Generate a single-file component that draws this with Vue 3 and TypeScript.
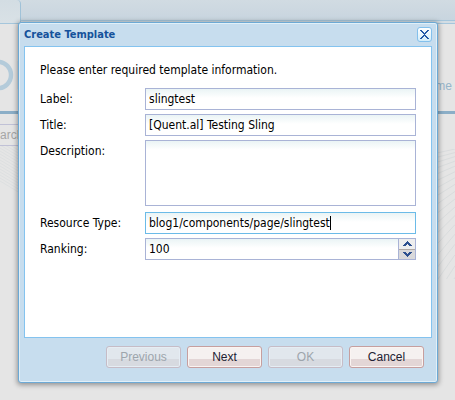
<script setup lang="ts">
import { reactive } from 'vue'

interface TemplateForm {
  label: string
  title: string
  description: string
  resourceType: string
  ranking: number
}

interface WizardButton {
  text: string
  disabled: boolean
}

const form = reactive<TemplateForm>({
  label: 'slingtest',
  title: '[Quent.al] Testing Sling',
  description: '',
  resourceType: 'blog1/components/page/slingtest',
  ranking: 100,
})

const buttons: WizardButton[] = [
  { text: 'Previous', disabled: true },
  { text: 'Next', disabled: false },
  { text: 'OK', disabled: true },
  { text: 'Cancel', disabled: false },
]

// Fan of diagonal rules behind the page content
const rays: number[] = Array.from({ length: 18 }, (_, i) => i)
</script>

<template>
  <div class="screen">
    <div class="page">
      <div class="tabs"><div class="tab"></div><div class="strip"></div></div>
      <header class="masthead">
        <svg class="logo" width="20" height="32" viewBox="0 0 20 32" aria-hidden="true">
          <ellipse cx="-2" cy="16" rx="13" ry="13.2" fill="none" stroke="#b4cbda" stroke-width="4.4" />
          <path d="M17.500 2v28" stroke="#dbe0e3" stroke-width="1" />
        </svg>
        <a class="home" href="#">me</a>
      </header>
      <div class="lower">
        <div class="search">arch</div>
        <svg class="fan fan-left" width="20" height="60" viewBox="0 0 20 60" aria-hidden="true">
          <path
            v-for="r in rays"
            :key="r"
            :d="`M0 ${r * 3 - 16}L20 ${r * 3 - 4}`"
            stroke="#dddfe0"
            stroke-width="1"
          />
        </svg>
        <svg class="fan fan-right" width="18" height="130" viewBox="0 0 18 130" aria-hidden="true">
          <path
            v-for="r in rays"
            :key="r"
            :d="`M0 ${4 + r * 4 + r * r * 0.300}L18 ${r * 3.300 + r * r * 0.250}`"
            stroke="#d9dcdd"
            stroke-width="1"
          />
        </svg>
      </div>
    </div>

    <section class="dialog" role="dialog" aria-labelledby="dialog-title">
      <header class="titlebar">
        <h1 id="dialog-title">Create Template</h1>
        <button class="close" type="button" aria-label="Close">
          <svg width="9" height="9" viewBox="0 0 9 9" shape-rendering="crispEdges" aria-hidden="true">
            <path
              fill="#2459a8"
              d="M0 0h2v1h1v1h1v1h1V2h1V1h1V0h2v1H8v1H7v1H6v1H5v1h1v1h1v1h1v1h1v1H7V8H6V7H5V6H4v1H3v1H2v1H0V8h1V7h1V6h1V5h1V4H3V3H2V2H1V1H0z"
            />
          </svg>
        </button>
      </header>

      <form class="panel" @submit.prevent>
        <p>Please enter required template information.</p>
        <div class="row">
          <label for="label">Label:</label>
          <input id="label" v-model="form.label" type="text" />
        </div>
        <div class="row">
          <label for="title">Title:</label>
          <input id="title" v-model="form.title" type="text" />
        </div>
        <div class="row tall">
          <label for="description">Description:</label>
          <textarea id="description" v-model="form.description"></textarea>
        </div>
        <div class="row">
          <label for="resource">Resource Type:</label>
          <div class="active">
            <input id="resource" v-model="form.resourceType" type="text" />
            <span class="caret"></span>
          </div>
        </div>
        <div class="row">
          <label for="ranking">Ranking:</label>
          <div class="spinner">
            <input id="ranking" v-model.number="form.ranking" type="text" />
            <div class="steps">
              <button type="button" aria-label="Increase" @click="form.ranking++">
                <svg width="9" height="5" viewBox="0 0 9 5" shape-rendering="crispEdges" aria-hidden="true">
                  <path fill="#2c4f8f" d="M4 0h1v1h1v1h1v1h1v1h1v1H6V4H5V3H4v1H3v1H0V4h1V3h1V2h1V1h1z" />
                </svg>
              </button>
              <button type="button" aria-label="Decrease" @click="form.ranking--">
                <svg width="9" height="5" viewBox="0 0 9 5" shape-rendering="crispEdges" aria-hidden="true">
                  <path fill="#2c4f8f" d="M4 5h1V4h1V3h1V2h1V1h1V0H6v1H5v1H4V1H3V0H0v1h1v1h1v1h1v1h1z" />
                </svg>
              </button>
            </div>
          </div>
        </div>
      </form>

      <footer class="actions">
        <button v-for="b in buttons" :key="b.text" type="button" :disabled="b.disabled">{{ b.text }}</button>
      </footer>
    </section>
  </div>
</template>

<style>
body {
  background: #e5e5e5;
}
</style>

<style scoped>
* {
  box-sizing: border-box;
}
.screen {
  position: relative;
  display: flex;
  min-height: 100vh;
  padding: 22px 17px 17px 18px;
  overflow: hidden;
  background: #e5e5e5;
  font-family: "DejaVu Sans Condensed", "Noto Sans", sans-serif;
  font-size: 12px;
}
.page {
  position: absolute;
  inset: 0;
}
.tabs {
  display: flex;
  height: 24px;
  border-bottom: 1px solid #a5c6dc;
  background: #d3dde4;
}
.tab {
  width: 21px;
  border-right: 1px solid #a0c2d8;
  border-top-right-radius: 4px;
  background: linear-gradient(#d3dde3, #d9e1e6);
}
.strip {
  flex: 1;
  height: 21px;
  border-bottom: 1px solid #a5c6dc;
  background: linear-gradient(#d1dbe2, #c8d5df);
}
.masthead {
  display: flex;
  justify-content: space-between;
  height: 90px;
  padding-top: 35px;
  border-bottom: 3px solid #8baec7;
}
.home {
  padding: 20px 3px 0 0;
  color: #96b5ca;
  font: 12px/14px "Liberation Sans", sans-serif;
  text-decoration: none;
}
.lower {
  display: grid;
  grid-template-columns: 20px 1fr 18px;
  padding-top: 10px;
}
.search {
  grid-column: 1 / 3;
  width: 60px;
  height: 22px;
  border: 1px solid #c0c1d6;
  border-left: 0;
  background: #e5e5e5;
  color: #a6a6a6;
  font: 12px/20px "Liberation Sans", sans-serif;
}
.fan-left {
  grid-column: 1;
  grid-row: 2;
}
.fan-right {
  grid-column: 3;
  grid-row: 1 / 4;
  margin-top: 25px;
}
.dialog {
  position: relative;
  flex: 1;
  display: flex;
  flex-direction: column;
  padding: 0 5px;
  border: 1px solid #6ca9d5;
  border-radius: 3px;
  background: #c7ddee;
  box-shadow: inset 0 0 0 1px #e1f0f8, 0 1px 5px 1px rgba(0, 0, 0, 0.36);
}
.titlebar {
  display: flex;
  align-items: center;
  justify-content: space-between;
  height: 23px;
}
.titlebar h1 {
  margin: 0;
  color: #15529b;
  font-size: 11px;
  font-weight: bold;
  line-height: 16px;
}
.close {
  display: grid;
  place-items: center;
  width: 15px;
  height: 15px;
  padding: 0;
  border: 1px solid #83c0ec;
  border-radius: 3px;
  background: linear-gradient(#ffffff, #d3edfa);
}
.panel {
  flex: 1;
  display: flex;
  flex-direction: column;
  gap: 4px;
  padding: 15px 15px 0;
  border: 1px solid #84c3ef;
  background: #ffffff;
  color: #000000;
}
.panel p {
  margin: 0 0 6px;
  line-height: 16px;
}
.row {
  display: grid;
  grid-template-columns: 105px 1fr;
  line-height: 16px;
}
.row label {
  padding-top: 3px;
}
.tall {
  margin-bottom: 2px;
}
.row input,
.row textarea {
  display: block;
  width: 100%;
  min-width: 0;
  height: 22px;
  margin: 0;
  padding: 1px 3px;
  border: 1px solid #a9b3d6;
  border-radius: 0;
  outline: none;
  background: linear-gradient(#eaf4f5, #ffffff 9px);
  color: #000000;
  font: inherit;
}
.row textarea {
  height: 66px;
  resize: none;
}
.active {
  position: relative;
}
.row .active input {
  border-color: #6bbbe8;
  caret-color: transparent;
}
.caret {
  position: absolute;
  top: 4px;
  left: 185px;
  width: 1px;
  height: 14px;
  background: #000000;
}
.spinner {
  display: flex;
}
.spinner input {
  flex: 1;
}
.steps {
  display: flex;
  flex-direction: column;
  width: 17px;
  border: 1px solid #a9b3d6;
  border-left: 0;
}
.steps button {
  flex: 1;
  display: grid;
  place-items: center;
  padding: 0;
  border: 0;
  background: #eeeeee;
}
.steps button + button {
  border-top: 1px solid #b2aaa6;
  background: #d9d9db;
}
.actions {
  display: flex;
  justify-content: flex-end;
  gap: 6px;
  padding: 8px 8px 14px;
}
.actions button {
  width: 75px;
  height: 22px;
  padding: 0;
  border: 1px solid #c69f9f;
  border-radius: 3px;
  background: linear-gradient(#f5f1f0 60%, #e3d6d6 60%);
  box-shadow: inset 0 0 0 1px #faf4f2;
  color: #222233;
  font: 12px/14px "Liberation Sans", sans-serif;
}
.actions button:disabled {
  border-color: #c6bcc6;
  background: linear-gradient(#e1e7ed 60%, #d7dae0 60%);
  box-shadow: inset 0 0 0 1px #e5edf4;
  color: #9da5ac;
}
</style>
